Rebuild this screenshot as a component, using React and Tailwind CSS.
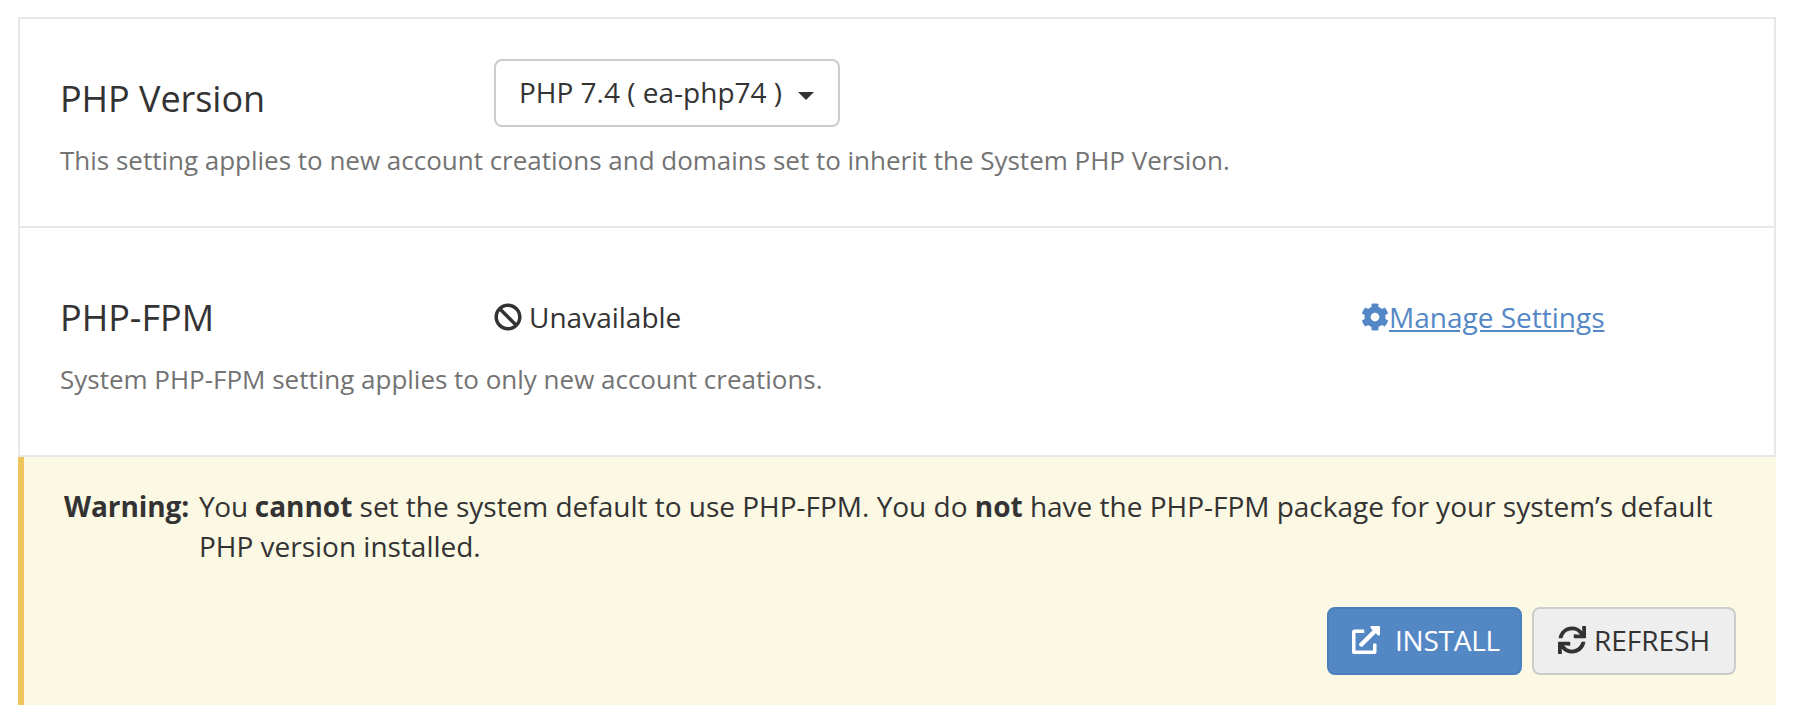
import { FaBan, FaCog, FaExternalLinkAlt, FaSync } from "react-icons/fa";

export default function App() {
  return (
    <main className="h-[724px] bg-white pt-[17px] pl-[18px] font-['Open_Sans',sans-serif] text-[28px] leading-10 text-[#333]">
      <div className="w-[1758px]">
        <section className="h-[211px] border-2 border-[#e8e8e8] px-10 pt-10">
          <div className="flex h-[68px] items-start">
            <h2 className="w-[434px] pt-5 text-[36px] leading-10 tracking-[-0.05px]">PHP Version</h2>
            <button className="flex h-[68px] w-[346px] items-center rounded-lg border-2 border-[#ccc] pb-0.5 pl-[23px]">
              PHP 7.4 ( ea-php74 )
              <svg className="mt-2 ml-4 h-2 w-4" viewBox="0 0 16 8"><path d="M0 0h16L8 8z" fill="#333" /></svg>
            </button>
          </div>
          <p className="mt-[13px] text-[26px] leading-10 tracking-[-0.01px] text-[#737373]">This setting applies to new account creations and domains set to inherit the System PHP Version.</p>
        </section>
        <section className="h-[229px] border-2 border-t-0 border-[#e8e8e8] px-10 pt-[69px]">
          <div className="flex h-10 items-center">
            <h2 className="w-[434px] pt-0.5 text-[36px] leading-10">PHP-FPM</h2>
            <div className="flex w-[867px] items-center gap-[7px]"><FaBan className="size-7" />Unavailable</div>
            <a className="flex items-center text-[#5487c5]" href="#"><FaCog className="size-7" /><span className="underline">Manage Settings</span></a>
          </div>
          <p className="mt-[22px] text-[26px] leading-10 tracking-[-0.01px] text-[#737373]">System PHP-FPM setting applies to only new account creations.</p>
        </section>
        <section className="h-[248px] border-l-[6px] border-[#eec55d] bg-[#fbf8e3] px-10 pt-[29px]">
          <div className="flex h-20">
            <strong className="w-[135px] font-bold tracking-[-0.1px]">Warning:</strong>
            <p className="flex-1 tracking-[-0.01px]"><span className="tracking-[-0.3px]">You </span><b className="font-bold">cannot</b> set the system default to use PHP-FPM. You do <b className="font-bold">not</b> have the PHP-FPM package for your system’s default PHP version installed.</p>
          </div>
          <div className="mt-[41px] flex justify-end gap-[10px]">
            <button className="flex h-[68px] w-[195px] items-center rounded-lg border-2 border-[#4980bd] bg-[#5488c5] pb-0.5 pl-[23px] tracking-[-0.25px] text-white"><FaExternalLinkAlt className="mr-[15px] size-7" />INSTALL</button>
            <button className="flex h-[68px] w-[204px] items-center rounded-lg border-2 border-[#ccc] bg-[#eee] pb-0.5 pl-6"><FaSync className="mr-2 size-7" />REFRESH</button>
          </div>
        </section>
      </div>
    </main>
  );
}
